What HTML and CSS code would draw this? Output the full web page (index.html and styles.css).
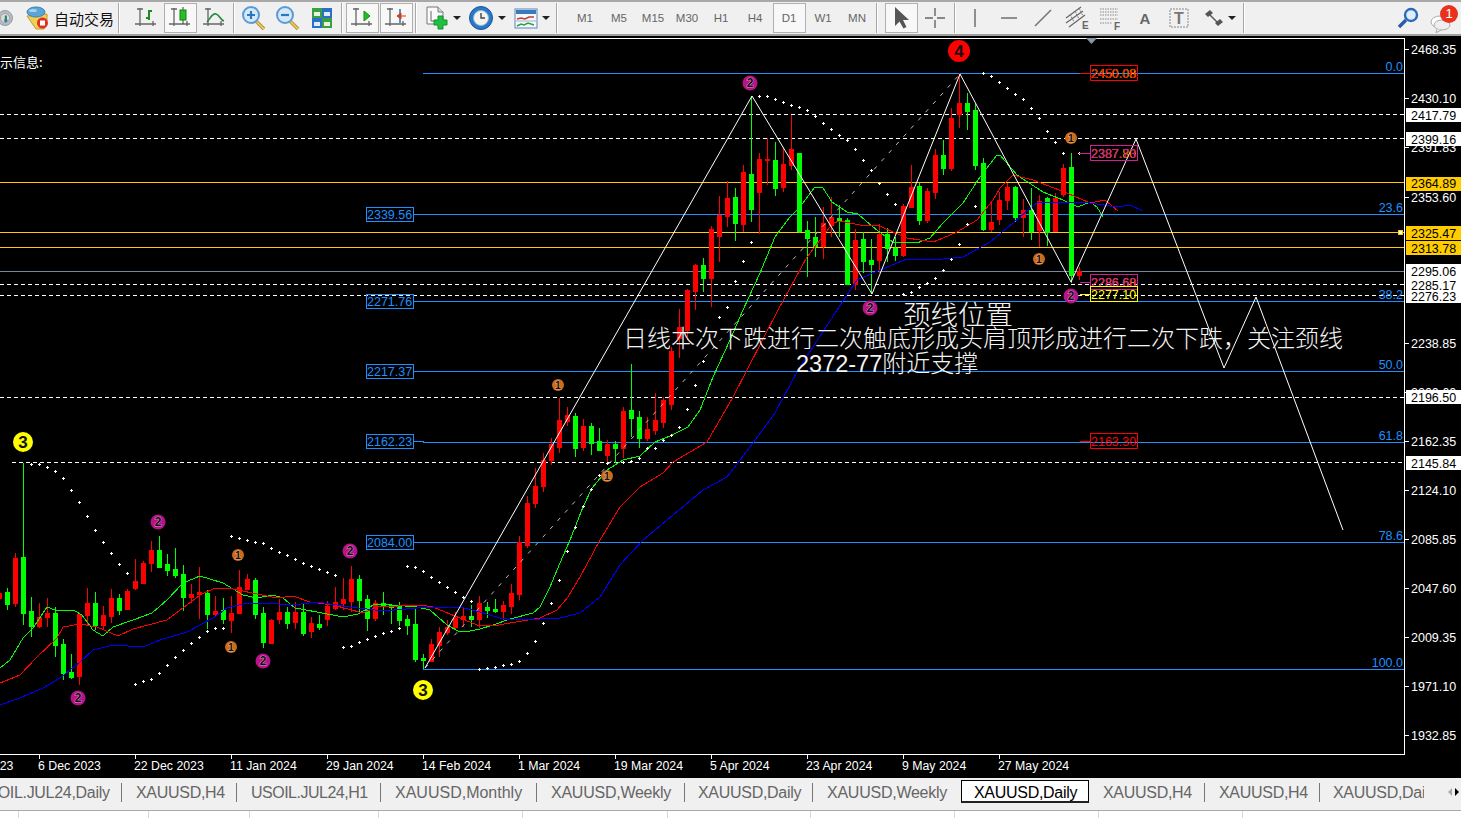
FILE: index.html
```html
<!DOCTYPE html>
<html lang="en">
<head>
    <meta charset="UTF-8">
    <title>XAUUSD,Daily</title>
    <link rel="stylesheet" href="styles.css">
</head>
<body>

    <!-- Toolbar -->
    <div class="toolbar">
        <div class="tool globe">
            <svg width="24" height="24" viewBox="0 0 24 24"><circle cx="6" cy="12" r="9" fill="#b8bcc0" stroke="#8a8e92"/><circle cx="6" cy="12" r="5.500" fill="#d8dadc" stroke="#9a9ea2"/><path d="M7 9v6" stroke="#2a8a4a" stroke-width="2.500"/><circle cx="7" cy="15" r="2" fill="#2c78b8"/></svg>
        </div>
        <div class="auto">
            <svg width="24" height="24" viewBox="0 0 24 24"><path d="M2 10l9 13h8l3-9V8z" fill="#f0d050" stroke="#c09a30"/><ellipse cx="11" cy="6" rx="9" ry="5" fill="#5aa4d8" stroke="#3a80b8"/><ellipse cx="8" cy="4.500" rx="4" ry="1.500" fill="#a8d4f0"/><circle cx="17.500" cy="17" r="5.500" fill="#e03020"/><rect x="15" y="14.500" width="5" height="5" fill="#fff"/></svg>
            <span>自动交易</span>
        </div>
        <div class="sep"></div>
        <div class="grip"></div>

        <div class="tool"><svg width="24" height="24" viewBox="0 0 24 24"><use href="#axes"/><path d="M15 4v10M15 5h3M15 12h-3" stroke="#1e8a1e" stroke-width="2" fill="none"/></svg></div>
        <div class="tool on"><svg width="24" height="24" viewBox="0 0 24 24"><use href="#axes"/><path d="M15 1v17" stroke="#444"/><rect x="12" y="4" width="6" height="10" fill="#22c022" stroke="#1a7a1a"/></svg></div>
        <div class="tool"><svg width="24" height="24" viewBox="0 0 24 24"><use href="#axes"/><path d="M5 16c3-3 5-9 9-8s4 6 8 7" stroke="#2a8a3a" stroke-width="1.600" fill="none"/></svg></div>
        <div class="sep"></div>

        <div class="tool"><svg width="26" height="26" viewBox="0 0 26 26"><use href="#lens"/><path d="M6 10h8M10 6v8" stroke="#2a78c0" stroke-width="2.200"/></svg></div>
        <div class="tool"><svg width="26" height="26" viewBox="0 0 26 26"><use href="#lens"/><path d="M6 10h8" stroke="#2a78c0" stroke-width="2.200"/></svg></div>
        <div class="tool">
            <svg width="24" height="24" viewBox="0 0 24 24"><rect x="2" y="2" width="10" height="10" fill="#3aa040"/><rect x="12" y="2" width="10" height="10" fill="#2a70c8"/><rect x="2" y="12" width="10" height="10" fill="#2a70c8"/><rect x="12" y="12" width="10" height="10" fill="#3aa040"/><rect x="4" y="6" width="6" height="4" fill="#e8f4e0"/><rect x="14" y="6" width="6" height="4" fill="#e0ecf8"/><rect x="4" y="16" width="6" height="4" fill="#e0ecf8"/><rect x="14" y="16" width="6" height="4" fill="#e8f4e0"/></svg>
        </div>
        <div class="sep"></div>

        <div class="tool on"><svg width="24" height="24" viewBox="0 0 24 24"><use href="#axes"/><path d="M14 5l6 5-6 5z" fill="#22c022" stroke="#1a8a1a"/></svg></div>
        <div class="tool on"><svg width="24" height="24" viewBox="0 0 24 24"><use href="#axes"/><path d="M16 3v14" stroke="#2070b0" stroke-width="1.500"/><path d="M22 10h-6M13 10l4-3v6z" fill="#d04020" stroke="#d04020"/></svg></div>
        <div class="sep"></div>

        <div class="tool wide">
            <svg width="26" height="26" viewBox="0 0 26 26"><path d="M4 2h11l5 5v12H4z" fill="#fafafa" stroke="#777"/><path d="M15 2v5h5" fill="#ddd" stroke="#777"/><path d="M8 6v10h5" stroke="#666" fill="none"/><path d="M15 11h5v4h4v5h-4v4h-5v-4h-4v-5h4z" fill="#22c040" stroke="#129030"/></svg>
            <i class="drop"></i>
        </div>
        <div class="tool wide">
            <svg width="26" height="26" viewBox="0 0 26 26"><circle cx="13" cy="13" r="11.500" fill="#2a78c8" stroke="#1a5898"/><circle cx="13" cy="13" r="7.500" fill="#f4f4ee" stroke="#98b8d8"/><path d="M13 8v5h4" stroke="#444" stroke-width="1.400" fill="none"/></svg>
            <i class="drop"></i>
        </div>
        <div class="tool wide">
            <svg width="24" height="24" viewBox="0 0 24 24"><rect x="1" y="3" width="22" height="19" fill="#f4f8fc" stroke="#5a88b8"/><rect x="2" y="4" width="20" height="4" fill="#3a78c0"/><path d="M3 13l4-1 4 1 4-2 5 0" stroke="#c04030" stroke-width="1.400" fill="none"/><path d="M2 15h20" stroke="#aac"/><path d="M3 20l4-2 3 1 4-2 6 2" stroke="#30a040" stroke-width="1.400" fill="none"/></svg>
            <i class="drop"></i>
        </div>
        <div class="sep"></div>
        <div class="grip grip-wide"></div>

        <div class="tool period">M1</div>
        <div class="tool period">M5</div>
        <div class="tool period">M15</div>
        <div class="tool period">M30</div>
        <div class="tool period">H1</div>
        <div class="tool period">H4</div>
        <div class="tool period on">D1</div>
        <div class="tool period">W1</div>
        <div class="tool period">MN</div>
        <div class="sep"></div>
        <div class="grip grip-tight"></div>

        <div class="tool on"><svg width="24" height="24" viewBox="0 0 24 24"><path d="M6 1v19l4.500-4.500 4 7 3-1.500-3.500-7h6z" fill="#555"/></svg></div>
        <div class="tool"><svg width="24" height="24" viewBox="0 0 24 24"><path d="M12 2v8M12 14v8M2 12h8M14 12h8" stroke="#666" stroke-width="1.400"/></svg></div>
        <div class="sep"></div>
        <div class="tool"><svg width="24" height="24" viewBox="0 0 24 24"><path d="M12 3v18" stroke="#777" stroke-width="1.600"/></svg></div>
        <div class="tool"><svg width="24" height="24" viewBox="0 0 24 24"><path d="M4 12h16" stroke="#777" stroke-width="1.600"/></svg></div>
        <div class="tool"><svg width="24" height="24" viewBox="0 0 24 24"><path d="M4 20L20 4" stroke="#777" stroke-width="1.600"/></svg></div>
        <div class="tool">
            <svg width="26" height="26" viewBox="0 0 26 26"><path d="M2 13L17 2M2 18L19 6M5 22L21 10" stroke="#666" stroke-width="1.200"/><path d="M6 9l4 8M11 6l4 8M15 3l4 8" stroke="#777" stroke-dasharray="2 1"/><text class="icon-letter" x="18" y="24">E</text></svg>
        </div>
        <div class="tool">
            <svg width="26" height="26" viewBox="0 0 26 26"><path d="M2 4h18M2 7h18M2 10h18M2 14h18M2 18h12" stroke="#888" stroke-dasharray="1.500 1"/><text class="icon-letter" x="16" y="25">F</text></svg>
        </div>
        <div class="tool"><span class="tool-a">A</span></div>
        <div class="tool">
            <svg width="24" height="24" viewBox="0 0 24 24"><rect x="3" y="3" width="18" height="18" fill="none" stroke="#888" stroke-dasharray="2 1"/><text class="icon-t" x="12" y="18">T</text></svg>
        </div>
        <div class="tool wide tight">
            <svg width="26" height="26" viewBox="0 0 26 26"><path d="M4 9l5-4 3 3-5 4zM17 21l5-4-3-3-5 4z" fill="#555"/><path d="M9 10l7 7" stroke="#555" stroke-width="1.400"/></svg>
            <i class="drop"></i>
        </div>
        <div class="sep sep-end"></div>

        <div class="tool search">
            <svg width="24" height="24" viewBox="0 0 24 24"><circle cx="15" cy="9" r="6" fill="#dcecf8" stroke="#2a6ab8" stroke-width="2.400"/><path d="M10 14l-7 7" stroke="#2a5aa8" stroke-width="3.400"/></svg>
        </div>
        <div class="chat">
            <svg width="30" height="30" viewBox="0 0 30 30"><ellipse cx="11" cy="19" rx="9" ry="6" fill="#fff" stroke="#aaa"/><ellipse cx="13" cy="22" rx="8" ry="5" fill="#eee" stroke="#aaa"/><path d="M8 26l-1 4 5-3" fill="#eee" stroke="#aaa"/></svg>
            <span class="badge">1</span>
        </div>
    </div>

    <!-- Icon parts -->
    <svg class="defs" width="0" height="0">
        <defs>
            <g id="axes" fill="none" stroke="#666" stroke-width="1.300">
                <path d="M6 2v18M3 3h6M1 18h21M19 15v5"/>
            </g>
            <g id="lens">
                <path d="M15 16l8 8" stroke="#b89030" stroke-width="3.600"/>
                <path d="M15 16l8 8" stroke="#f0d070" stroke-width="1.400"/>
                <circle cx="10" cy="10" r="8" fill="#d4e8f8" stroke="#5a9ad8" stroke-width="2"/>
            </g>
        </defs>
    </svg>

    <!-- Chart, drawn in page coordinates -->
    <svg class="chart" width="1461" height="742" viewBox="0 36 1461 742">
        <g class="hlines">
            <path class="dash" d="M0 114.500H1404M0 138.500H1404M0 284.500H1404M0 295.500H1404M0 397.500H1404M12 462.500H1404"/>
            <path class="gold" d="M0 182.500H1404M0 232.500H1404M0 247.500H1404"/>
            <path class="grey" d="M0 271.500H1404"/>
            <path class="fib" d="M423 73.500H1404M413 214.500H1404M413 301.500H1404M413 371.500H1404M413 441.500H423V442.500H1404M413 542.500H1404M423 669.500H1404"/>
        </g>

        <g id="candles" shape-rendering="crispEdges"></g>
        <g id="averages" fill="none" shape-rendering="crispEdges"></g>
        <path id="sar" class="sar"></path>

        <polyline class="guide" points="425,668 960,74"/>
        <polyline class="zigzag" points="425,668 752,96 872,294 960,74 1071,282 1136,139 1224,368 1256,297 1343,530"/>

        <!-- Wave counts -->
        <g class="wave yellow"><circle cx="23" cy="442" r="10"/><text x="23" y="448">3</text></g>
        <g class="wave yellow"><circle cx="423" cy="690" r="10"/><text x="423" y="696">3</text></g>
        <g class="wave red"><circle cx="959" cy="51" r="11"/><text x="959" y="57">4</text></g>
        <g class="wave pink">
            <circle cx="750" cy="83" r="7.500"/><text x="750" y="87">2</text>
            <circle cx="158" cy="522" r="7.500"/><text x="158" y="526">2</text>
            <circle cx="350" cy="551" r="7.500"/><text x="350" y="555">2</text>
            <circle cx="263" cy="661" r="7.500"/><text x="263" y="665">2</text>
            <circle cx="78" cy="698" r="7.500"/><text x="78" y="702">2</text>
            <circle cx="870" cy="308" r="7.500"/><text x="870" y="312">2</text>
            <circle cx="1071" cy="296" r="7.500"/><text x="1071" y="300">2</text>
        </g>
        <g class="wave orange">
            <circle cx="238" cy="555" r="6"/><text x="238" y="559">1</text>
            <circle cx="231" cy="647" r="6"/><text x="231" y="651">1</text>
            <circle cx="558" cy="385" r="6"/><text x="558" y="389">1</text>
            <circle cx="607" cy="476" r="6"/><text x="607" y="480">1</text>
            <circle cx="1071" cy="138" r="6"/><text x="1071" y="142">1</text>
            <circle cx="1039" cy="259" r="6"/><text x="1039" y="263">1</text>
        </g>

        <text class="info" x="-13" y="67">提示信息:</text>

        <!-- Left price labels -->
        <g class="tag blue">
            <rect x="366" y="207.500" width="47" height="14"/><text x="367" y="219">2339.56</text>
            <rect x="366" y="294.500" width="47" height="14"/><text x="367" y="306">2271.76</text>
            <rect x="366" y="364.500" width="47" height="14"/><text x="367" y="376">2217.37</text>
            <rect x="366" y="434.500" width="47" height="14"/><text x="367" y="446">2162.23</text>
            <rect x="366" y="535.500" width="47" height="14"/><text x="367" y="547">2084.00</text>
        </g>

        <!-- Right price labels -->
        <path class="link-red" d="M1080 73.500H1090M1080 441.500H1090"/>
        <path class="link-pink" d="M1079 153.500H1090M1080 282.500H1090"/>
        <path class="link-yellow" d="M1080 294.500H1090"/>
        <g class="tag red">
            <rect x="1090.500" y="65.500" width="47" height="15"/>
            <text class="under-yellow" x="1091" y="78">2450.08</text><text x="1091" y="78">2450.06</text>
            <rect x="1090.500" y="433.500" width="47" height="15"/><text x="1091" y="446">2163.30</text>
        </g>
        <g class="tag pink">
            <rect x="1090.500" y="145.500" width="47" height="15"/>
            <text class="under-orange" x="1091" y="158">2387.80</text><text x="1091" y="158">2387.73</text>
            <rect x="1090.500" y="274.500" width="47" height="15"/>
            <text class="under-orange" x="1091" y="287">2286.68</text><text x="1091" y="287">2286.60</text>
        </g>
        <g class="tag yellow"><rect x="1090.500" y="286.500" width="47" height="15"/><text x="1091" y="299">2277.10</text></g>

        <!-- Fibonacci levels -->
        <g class="fib-label">
            <text x="1403" y="71">0.0</text>
            <text x="1403" y="212">23.6</text>
            <text x="1403" y="299">38.2</text>
            <text x="1403" y="369">50.0</text>
            <text x="1403" y="440">61.8</text>
            <text x="1403" y="540">78.6</text>
            <text x="1403" y="667">100.0</text>
        </g>

        <!-- Comment -->
        <g class="note">
            <text class="note-big" x="903" y="325">颈线位置</text>
            <text x="623" y="347">日线本次下跌进行二次触底形成头肩顶形成进行二次下跌，关注颈线</text>
            <text x="796" y="372"><tspan class="note-num">2372-77</tspan>附近支撑</text>
        </g>

        <!-- Frame and axes -->
        <path class="frame" d="M0 38.500H1404.500V754.500H0"/>
        <path class="frame" d="M1405 49.500h4M1405 98.500h4M1405 147.500h4M1405 197.500h4M1405 343.500h4M1405 392.500h4M1405 441.500h4M1405 490.500h4M1405 539.500h4M1405 588.500h4M1405 637.500h4M1405 686.500h4M1405 735.500h4"/>
        <path class="frame" d="M39.500 755v4M135.500 755v4M231.500 755v4M327.500 755v4M423.500 755v4M519.500 755v4M615.500 755v4M711.500 755v4M807.500 755v4M903.500 755v4M999.500 755v4"/>
        <path class="notch" d="M1086 38h11l-5.500 6z"/>
        <rect class="marker" x="1398.500" y="230.500" width="4" height="4"/>

        <g class="axis">
            <text x="1411" y="54">2468.35</text>
            <text x="1411" y="103">2430.10</text>
            <text x="1411" y="152">2391.83</text>
            <text x="1411" y="202">2353.60</text>
            <text x="1411" y="348">2238.85</text>
            <text x="1411" y="397">2200.60</text>
            <text x="1411" y="446">2162.35</text>
            <text x="1411" y="495">2124.10</text>
            <text x="1411" y="544">2085.85</text>
            <text x="1411" y="593">2047.60</text>
            <text x="1411" y="642">2009.35</text>
            <text x="1411" y="691">1971.10</text>
            <text x="1411" y="740">1932.85</text>
        </g>

        <g class="price-box white">
            <rect x="1406" y="108" width="55" height="14"/><text x="1411" y="120">2417.79</text>
            <rect x="1406" y="132" width="55" height="14"/><text x="1411" y="144">2399.16</text>
            <rect x="1406" y="264" width="55" height="39"/>
            <text x="1411" y="276">2295.06</text><text x="1411" y="290">2285.17</text><text x="1411" y="301">2276.23</text>
            <rect x="1406" y="390" width="55" height="14"/><text x="1411" y="402">2196.50</text>
            <rect x="1406" y="456" width="55" height="14"/><text x="1411" y="468">2145.84</text>
        </g>
        <g class="price-box gold-box">
            <rect x="1406" y="177" width="55" height="14"/><text x="1411" y="188">2364.89</text>
            <rect x="1406" y="226" width="55" height="14"/><text x="1411" y="238">2325.47</text>
            <rect x="1406" y="241" width="55" height="14"/><text x="1411" y="253">2313.78</text>
        </g>

        <g class="axis dates">
            <text x="-14" y="770">2023</text>
            <text x="38" y="770">6 Dec 2023</text>
            <text x="134" y="770">22 Dec 2023</text>
            <text x="230" y="770">11 Jan 2024</text>
            <text x="326" y="770">29 Jan 2024</text>
            <text x="422" y="770">14 Feb 2024</text>
            <text x="518" y="770">1 Mar 2024</text>
            <text x="614" y="770">19 Mar 2024</text>
            <text x="710" y="770">5 Apr 2024</text>
            <text x="806" y="770">23 Apr 2024</text>
            <text x="902" y="770">9 May 2024</text>
            <text x="998" y="770">27 May 2024</text>
        </g>
    </svg>

    <!-- Chart tabs -->
    <div class="tabbar">
        <div class="tabs">
            <span class="tab tab-first">USOIL.JUL24,Daily</span>
            <span class="tab tab-h4">XAUUSD,H4</span>
            <span class="tab tab-oil">USOIL.JUL24,H1</span>
            <span class="tab tab-month">XAUUSD,Monthly</span>
            <span class="tab tab-week">XAUUSD,Weekly</span>
            <span class="tab tab-day">XAUUSD,Daily</span>
            <span class="tab tab-week no-line">XAUUSD,Weekly</span>
            <span class="tab tab-active">XAUUSD,Daily</span>
            <span class="tab tab-h4 tab-h4-next">XAUUSD,H4</span>
            <span class="tab tab-h4">XAUUSD,H4</span>
            <span class="tab tab-day no-line">XAUUSD,Daily</span>
        </div>
        <div class="tab-arrows"><i class="arrow-left"></i><i class="arrow-right"></i></div>
    </div>

    <!-- Status bar -->
    <div class="statusbar">
        <span></span><span></span><span></span><span></span><span></span><span></span><span></span><span></span><span></span><span></span><span></span>
    </div>

    <script src="chart.js"></script>
</body>
</html>
```

FILE: styles.css
```css
* {
    margin: 0;
    padding: 0;
    box-sizing: border-box;
}

html, body {
    width: 1461px;
    height: 818px;
    overflow: hidden;
}

body {
    font-family: "Liberation Sans", Arial, sans-serif;
    background-color: #000;
}

/* Toolbar */
.toolbar {
    display: flex;
    align-items: center;
    height: 36px;
    background-color: #f0f0f0;
    border-top: 2px solid #a8a8a8;
    border-bottom: 2px solid #a0a0a0;
    overflow: hidden;
}

.tool {
    display: flex;
    align-items: center;
    justify-content: center;
    flex: none;
    width: 34px;
    height: 30px;
}

.tool.on {
    width: 33px;
    margin: 0 0.5px;
    background-color: #f8f8f8;
    background-image: radial-gradient(#e4e4e4 0.5px, transparent 0.6px);
    background-size: 2px 2px;
    border: 1px solid #b0b0b0;
}

.tool.wide {
    width: 45px;
    gap: 4px;
}

.tool.tight {
    gap: 1px;
    justify-content: flex-start;
    padding-left: 5px;
}

.globe {
    width: 20px;
    justify-content: flex-start;
}

.auto {
    display: flex;
    align-items: center;
    gap: 5px;
    flex: none;
    width: 96px;
    padding-left: 5px;
    font-family: "Noto Sans CJK SC", sans-serif;
    font-size: 15px;
    color: #111;
    white-space: nowrap;
}

.sep {
    flex: none;
    width: 2px;
    height: 30px;
    margin: 0 2px;
    background-color: #a8a8a8;
    border-right: 1px solid #fff;
}

.grip {
    flex: none;
    width: 4px;
    height: 26px;
    margin-right: 3px;
    background-image: radial-gradient(#888 0.6px, transparent 0.7px);
    background-size: 3px 2px;
}

.grip-wide {
    margin-right: 4px;
}

.grip-tight {
    margin-right: 0;
}

.drop {
    flex: none;
    width: 0;
    height: 0;
    border-left: 4px solid transparent;
    border-right: 4px solid transparent;
    border-top: 4px solid #222;
}

.period {
    font-size: 11.500px;
    color: #666;
}

.icon-letter {
    font-size: 10px;
    font-weight: bold;
    fill: #666;
}

.icon-t {
    font-size: 16px;
    font-weight: bold;
    text-anchor: middle;
    fill: #777;
}

.tool-a {
    font-size: 15px;
    font-weight: bold;
    color: #666;
}

.sep-end {
    margin-right: 151px;
}

.search {
    width: 24px;
    margin-right: 9px;
}

.chat {
    position: relative;
    flex: none;
    width: 30px;
    height: 30px;
}

.badge {
    position: absolute;
    top: 2px;
    left: 11px;
    width: 18px;
    height: 18px;
    border-radius: 50%;
    background-color: #e8321e;
    color: #fff;
    font-size: 13px;
    line-height: 18px;
    text-align: center;
}

.defs {
    position: absolute;
}

/* Chart */
.chart {
    display: block;
    background-color: #000;
    font-family: "Liberation Sans", Arial, sans-serif;
    font-size: 12.500px;
}

.hlines path {
    fill: none;
    shape-rendering: crispEdges;
}

.dash {
    stroke: #fff;
    stroke-dasharray: 4 3;
}

.gold {
    stroke: #ffcc00;
}

.grey {
    stroke: #778899;
}

.fib {
    stroke: #1e90ff;
}

.sar {
    fill: none;
    stroke: #fff;
    shape-rendering: crispEdges;
}

.zigzag {
    fill: none;
    stroke: #fff;
}

.guide {
    fill: none;
    stroke: #bbb;
    stroke-dasharray: 4 7;
}

.wave text {
    font-weight: bold;
    text-anchor: middle;
    fill: #111;
}

.wave.yellow circle {
    fill: #ffff00;
}

.wave.yellow text,
.wave.red text {
    font-size: 17px;
}

.wave.red circle {
    fill: #ff0000;
}

.wave.pink circle {
    fill: #b8128a;
}

.wave.pink text {
    font-size: 12px;
    stroke: #e090c8;
    stroke-width: 1px;
    paint-order: stroke;
}

.wave.orange circle {
    fill: #cc6a1a;
}

.wave.orange text {
    font-size: 10.500px;
    stroke: #e8b080;
    stroke-width: 1px;
    paint-order: stroke;
}

.info {
    font-family: "Noto Sans CJK SC", sans-serif;
    font-size: 13px;
    fill: #fff;
}

.tag rect {
    fill: #000;
    fill-opacity: 0;
    shape-rendering: crispEdges;
}

.tag.blue rect {
    stroke: #1e90ff;
}

.tag.blue text {
    fill: #1e90ff;
}

.tag.red rect {
    stroke: #ff0000;
}

.tag.red text {
    fill: #ff0000;
}

.tag.pink rect {
    stroke: #d0208f;
}

.tag.pink text {
    fill: #d0208f;
}

.tag.yellow rect {
    stroke: #ffff00;
}

.tag.yellow text {
    fill: #ffff00;
}

.tag text.under-yellow {
    fill: #ffff00;
}

.tag text.under-orange {
    fill: #ff8c00;
}

.link-red,
.link-pink,
.link-yellow {
    fill: none;
    shape-rendering: crispEdges;
}

.link-red {
    stroke: #ff0000;
}

.link-pink {
    stroke: #d0208f;
}

.link-yellow {
    stroke: #ffff00;
}

.fib-label text {
    fill: #1e90ff;
    text-anchor: end;
}

.note text {
    font-family: "Noto Sans CJK SC", sans-serif;
    font-size: 24px;
    font-weight: 300;
    fill: #f4f4f4;
}

.note .note-big {
    font-size: 27.500px;
}

.note-num {
    font-family: "Liberation Sans", sans-serif;
    font-size: 23.500px;
}

.frame {
    fill: none;
    stroke: #fff;
    shape-rendering: crispEdges;
}

.notch {
    fill: #8a96a4;
}

.marker {
    fill: #fff;
    stroke: #ffcc00;
}

.axis text {
    fill: #fff;
}

.dates text {
    font-size: 12.300px;
}

.price-box text {
    fill: #000;
}

.price-box.white rect {
    fill: #fff;
}

.price-box.gold-box rect {
    fill: #ffcc00;
}

/* Tabs */
.tabbar {
    display: flex;
    height: 33px;
    background-color: #f0f0f0;
    border-bottom: 1px solid #a8a8a8;
}

.tabs {
    display: flex;
    align-items: flex-start;
    width: 1424px;
    padding-top: 5px;
    overflow: hidden;
}

.tab {
    flex: none;
    height: 19px;
    padding-left: 14px;
    border-right: 1px solid #777;
    font-size: 16px;
    line-height: 19px;
    color: #666;
    white-space: nowrap;
    overflow: hidden;
}

.tab-first {
    width: 160px;
    margin-left: -38px;
    letter-spacing: -0.300px;
}

.tab-h4 {
    width: 115px;
    letter-spacing: -0.300px;
}

.tab-h4-next {
    width: 116px;
}

.tab-oil {
    width: 144px;
    letter-spacing: -0.500px;
}

.tab-month {
    width: 156px;
}

.tab-week {
    width: 148px;
    letter-spacing: -0.250px;
}

.tab-day {
    width: 128px;
    padding-left: 13px;
    letter-spacing: -0.300px;
}

.no-line {
    border-right: none;
}

.tab-active {
    width: 128px;
    height: 23px;
    margin-top: -3px;
    padding: 2px 0 0 12px;
    background-color: #fff;
    border: 1px solid #000;
    border-bottom: 2px solid #222;
    letter-spacing: -0.300px;
    color: #000;
}

.tab-arrows {
    display: flex;
    align-items: center;
    gap: 3px;
    height: 27px;
    padding-left: 24px;
}

.arrow-left,
.arrow-right {
    width: 0;
    height: 0;
    border-top: 4px solid transparent;
    border-bottom: 4px solid transparent;
}

.arrow-left {
    border-right: 4px solid #aaa;
}

.arrow-right {
    border-left: 4px solid #000;
}

/* Status bar */
.statusbar {
    display: grid;
    grid-template-columns: 19px 130px 101px 129px 144px 145px 143px 144px 144px 144px 1fr;
    height: 8px;
    background-color: #fff;
}

.statusbar span {
    border-right: 1px solid #d8d8d8;
}

.statusbar span:last-child {
    border-right: none;
}
```

FILE: chart.js
```js
// Daily candles, one every 8px starting at x = -1
// wick top, body top, body bottom, wick bottom, up (green) or down (red)
const candles = [
    [590,593,598,600,'r'],[588,592,604,610,'g'],[553,558,603,607,'r'],[463,557,613,625,'g'],
    [597,611,626,637,'g'],[603,617,626,628,'r'],[598,613,617,627,'r'],[607,613,645,657,'g'],
    [639,644,673,680,'g'],[654,672,677,679,'g'],[614,614,676,685,'r'],[588,603,615,625,'r'],
    [592,603,625,630,'g'],[606,615,625,629,'r'],[589,598,616,623,'r'],[594,598,610,615,'g'],
    [589,591,609,610,'r'],[559,581,588,590,'r'],[561,563,583,583,'r'],[541,550,563,572,'r'],
    [536,550,567,567,'g'],[554,564,570,576,'g'],[548,569,575,578,'g'],[565,574,597,611,'g'],
    [584,594,597,603,'r'],[567,592,594,619,'r'],[590,593,614,629,'g'],[596,611,614,617,'r'],
    [598,610,619,624,'g'],[596,613,620,633,'r'],[570,587,613,614,'r'],[574,579,589,589,'r'],
    [578,580,614,619,'g'],[607,613,642,648,'g'],[619,620,643,643,'r'],[599,612,619,624,'r'],
    [607,612,623,629,'g'],[602,612,622,629,'r'],[603,612,633,636,'g'],[617,623,631,638,'r'],
    [615,624,627,630,'g'],[601,606,619,626,'r'],[587,602,608,610,'r'],[578,599,603,610,'r'],
    [566,579,601,612,'r'],[575,579,600,613,'g'],[595,599,618,631,'g'],[600,603,618,621,'r'],
    [592,603,605,615,'g'],[604,605,607,624,'g'],[602,606,620,626,'g'],[615,619,625,635,'g'],
    [609,624,659,662,'g'],[654,658,660,669,'g'],[639,644,661,662,'r'],[627,632,645,657,'r'],
    [620,627,632,635,'r'],[612,618,627,630,'r'],[607,616,619,627,'r'],[605,616,619,627,'g'],
    [596,603,619,628,'r'],[602,607,610,618,'g'],[599,609,611,613,'g'],[601,605,611,620,'r'],
    [584,593,606,614,'r'],[536,542,594,600,'r'],[496,503,545,548,'r'],[468,486,503,508,'r'],
    [453,460,486,492,'r'],[438,444,460,465,'r'],[398,420,447,453,'r'],[407,415,421,426,'r'],
    [413,416,448,457,'g'],[419,426,447,451,'r'],[423,426,443,455,'g'],[428,441,450,451,'g'],
    [440,444,455,463,'r'],[441,444,448,463,'g'],[407,411,448,458,'r'],[364,410,418,437,'g'],
    [411,417,438,448,'g'],[417,429,438,441,'r'],[393,420,430,435,'r'],[397,400,422,428,'r'],
    [347,351,404,410,'r'],[309,327,338,358,'r'],[289,290,330,340,'r'],[264,265,291,310,'r'],
    [258,265,278,292,'g'],[226,229,278,307,'r'],[196,215,236,262,'r'],[181,198,216,227,'r'],
    [188,197,223,241,'g'],[165,172,224,232,'r'],[96,174,209,222,'g'],[153,159,192,234,'r'],
    [138,159,160,185,'r'],[142,160,188,196,'g'],[147,164,187,192,'r'],[115,149,165,170,'r'],
    [153,153,231,233,'g'],[221,230,238,277,'g'],[217,237,246,257,'g'],[207,223,246,259,'r'],
    [197,217,225,237,'r'],[205,218,221,237,'g'],[218,220,284,284,'g'],[229,240,284,290,'r'],
    [232,239,261,273,'g'],[239,260,264,293,'g'],[224,234,260,273,'r'],[228,234,248,262,'g'],
    [237,248,255,261,'g'],[204,206,255,257,'r'],[165,187,207,207,'r'],[183,186,220,225,'g'],
    [188,191,220,223,'r'],[149,155,192,199,'r'],[140,155,168,175,'g'],[108,118,168,171,'r'],
    [73,103,114,128,'r'],[93,103,111,130,'g'],[103,110,165,170,'g'],[158,163,229,231,'g'],
    [203,222,229,232,'r'],[192,200,219,225,'r'],[183,187,200,210,'r'],[186,187,217,222,'g'],
    [199,210,217,237,'r'],[188,210,231,240,'g'],[195,201,230,247,'r'],[197,198,232,246,'g'],
    [193,198,231,232,'r'],[164,168,194,197,'r'],[153,167,275,283,'g'],[267,271,275,280,'r']
];

// Moving averages, x,y pairs in page coordinates
const averages = {
    '#00ff00': [0,668,10,660,23,638,33,628,47,607,55,610,75,611,82,615,93,630,103,636,113,627,133,620,152,613,167,600,183,583,200,576,223,583,243,595,257,598,273,595,283,598,295,608,317,612,343,617,358,614,375,604,392,605,417,607,430,610,447,625,460,632,470,631,480,629,493,625,510,619,533,613,540,607,550,587,560,563,570,540,583,507,592,488,607,470,623,460,640,456,655,442,670,436,688,427,700,410,713,377,730,340,743,310,760,273,775,237,790,217,800,207,815,187,823,188,832,202,847,212,858,214,873,227,893,242,917,243,930,238,943,223,963,203,980,177,997,155,1000,155,1017,175,1043,192,1063,200,1078,207,1090,202,1097,207,1103,217],
    '#ff0000': [0,683,20,675,37,657,57,638,63,627,80,624,97,627,118,636,133,629,167,620,183,608,200,595,215,588,233,589,257,594,277,598,293,596,310,602,333,605,363,613,377,607,420,605,433,607,450,614,465,620,477,625,493,626,510,623,540,618,557,610,568,597,580,577,600,540,620,507,640,487,663,473,673,462,707,442,733,397,747,370,778,310,807,257,833,223,840,221,860,225,877,225,907,238,933,242,943,238,957,232,977,220,993,200,1000,188,1013,175,1033,180,1067,193,1090,203,1105,200,1118,211],
    '#0000ff': [0,705,20,698,43,688,60,678,80,662,93,650,113,645,143,647,160,640,187,632,213,618,227,608,243,604,263,603,293,605,317,602,350,607,383,611,417,608,450,607,460,607,480,612,500,618,513,620,540,619,560,618,580,613,600,597,620,565,643,540,667,520,703,490,727,477,753,443,775,413,798,370,837,310,857,280,880,270,907,259,933,260,963,257,990,242,1013,223,1028,210,1038,202,1067,202,1090,203,1117,207,1130,205,1143,211]
};

// Parabolic SAR dots
const sar = [
    31,464,39,464,47,467,55,471,63,478,71,490,79,502,87,516,95,530,103,542,111,553,119,564,127,573,
    135,684,143,681,151,679,159,673,167,665,175,657,183,650,191,643,199,637,207,631,215,628,223,628,
    231,536,239,538,247,540,255,542,263,543,271,548,279,552,287,555,295,559,303,563,311,566,319,569,327,572,335,575,
    343,647,351,646,359,642,367,639,375,636,383,633,391,631,399,628,
    407,566,415,567,423,571,431,577,439,582,447,587,455,592,463,597,471,601,
    479,669,487,668,495,667,503,665,511,664,519,661,527,653,535,641,543,623,551,603,559,580,567,551,575,527,
    583,506,591,489,599,475,607,463,623,462,631,461,639,458,647,448,655,448,663,440,671,435,679,427,687,409,695,385,703,361,719,317,727,307,735,281,743,261,751,242,
    759,96,767,96,775,99,783,102,791,105,799,107,807,110,815,116,823,123,831,129,839,135,847,140,855,149,863,160,871,170,879,183,887,194,895,204,
    903,294,911,292,919,287,927,283,935,278,943,270,951,259,959,244,967,224,975,206,
    983,73,991,76,999,82,1007,88,1015,94,1023,99,1031,108,1039,118,1047,131,1055,142,1063,153,1079,153
];

const svgNS = 'http://www.w3.org/2000/svg';

function addRect(parent, x, y, w, h, fill) {
    const rect = document.createElementNS(svgNS, 'rect');
    rect.setAttribute('x', x);
    rect.setAttribute('y', y);
    rect.setAttribute('width', w);
    rect.setAttribute('height', h);
    rect.setAttribute('fill', fill);
    parent.appendChild(rect);
}

const candleGroup = document.getElementById('candles');
candles.forEach((c, i) => {
    const x = -1 + i * 8;
    const color = c[4] === 'g' ? '#00ff00' : '#ff0000';
    addRect(candleGroup, x, c[0], 1, c[3] - c[0], color);
    addRect(candleGroup, x - 2, c[1], 5, c[2] - c[1] + 1, color);
});

const averageGroup = document.getElementById('averages');
Object.keys(averages).forEach((color) => {
    const line = document.createElementNS(svgNS, 'polyline');
    line.setAttribute('points', averages[color].join(' '));
    line.setAttribute('stroke', color);
    averageGroup.appendChild(line);
});

let sarPath = '';
for (let i = 0; i < sar.length; i += 2) {
    sarPath += `M${sar[i] - 1} ${sar[i + 1] + 0.5}h3M${sar[i] + 0.5} ${sar[i + 1] - 1}v3`;
}
document.getElementById('sar').setAttribute('d', sarPath);
```
